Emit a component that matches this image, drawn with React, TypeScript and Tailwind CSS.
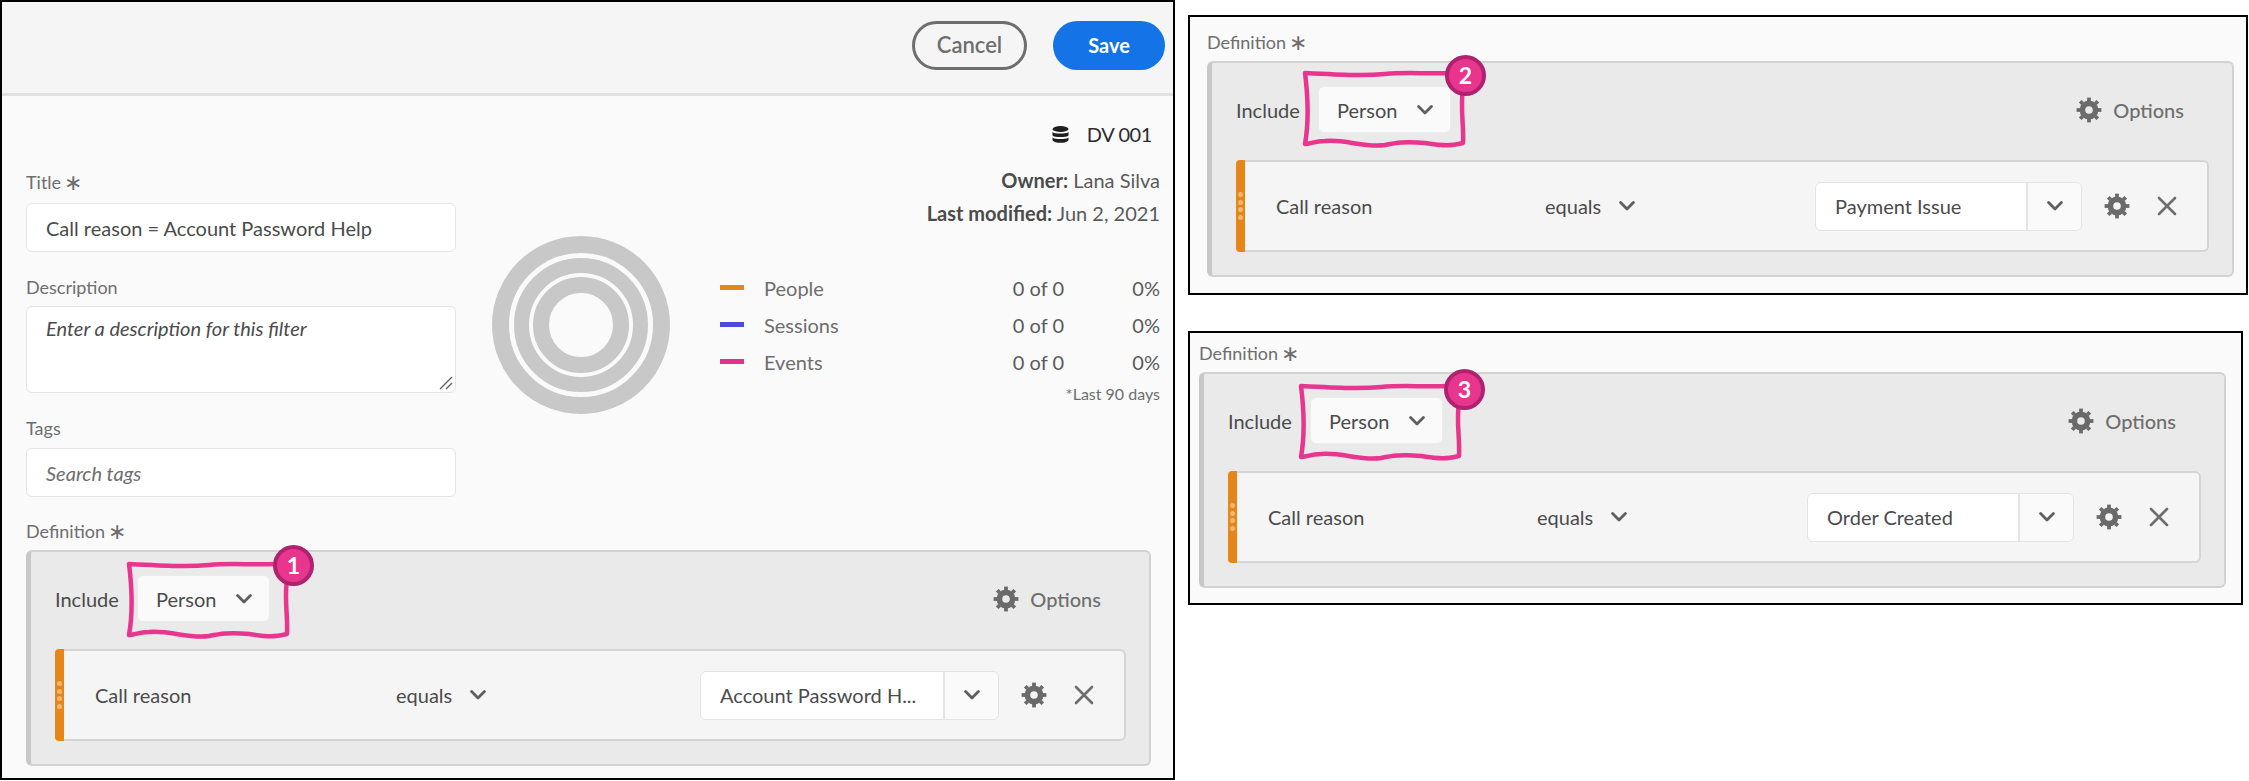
import React from "react";

function Chevron({ className = "" }: { className?: string }) {
  return (
    <svg viewBox="0 0 16 10" className={"w-4 h-[10px] " + className} fill="none" stroke="#5f5f5f" strokeWidth="2.8" strokeLinecap="round" strokeLinejoin="round">
      <polyline points="1.6,1.6 8,8 14.4,1.6" />
    </svg>
  );
}

function Gear() {
  const teeth = [0, 45, 90, 135, 180, 225, 270, 315];
  return (
    <svg viewBox="0 0 26 26" className="w-[26px] h-[26px] shrink-0" fill="none" stroke="#6a6a6a">
      <circle cx="13" cy="13" r="6.6" strokeWidth="5.6" />
      {teeth.map((a) => (
        <line key={a} x1="13" y1="4" x2="13" y2="0.6" strokeWidth="3.8" transform={`rotate(${a} 13 13)`} />
      ))}
    </svg>
  );
}

function Cross() {
  return (
    <svg viewBox="0 0 20 20" className="w-5 h-5 shrink-0" fill="none" stroke="#6e6e6e" strokeWidth="2.6" strokeLinecap="round">
      <line x1="2" y1="2" x2="18" y2="18" />
      <line x1="18" y1="2" x2="2" y2="18" />
    </svg>
  );
}

function Scribble({ className }: { className: string }) {
  return (
    <svg viewBox="0 0 170 82" className={"absolute w-[170px] h-[82px] pointer-events-none " + className} fill="none" stroke="#e8368f" strokeWidth="4.5" strokeLinejoin="round" strokeLinecap="round">
      <path d="M152 6 C125 7 105 5 85 7 C65 9 45 8 5 6 C8 30 9 55 5 77 C10 77 15 74 25 74 C45 72 65 81 85 78 C95 76 105 74 125 76 C145 79 150 79 163 76 C164 58 160 40 163 22" />
    </svg>
  );
}

function Badge({ n, className }: { n: number; className: string }) {
  return (
    <div className={"absolute w-[41px] h-[41px] rounded-full bg-[#e8368f] border-[4px] border-[#b0226f] flex items-center justify-center text-white text-[23px] font-bold " + className}>
      {n}
    </div>
  );
}

function Label({ children, star }: { children: React.ReactNode; star?: boolean }) {
  return (
    <div className="h-6 flex items-center gap-[3px] text-[18px] leading-6 text-[#6e6e6e]">
      <span>{children}</span>
      {star && <span className="text-[22px] text-[#6e6e6e]">∗</span>}
    </div>
  );
}

type DefProps = {
  value: string;
  n: number;
  boxW: string;
  rowW: string;
  equalsW: string;
  comboW: string;
  scribble: string;
  badge: string;
};

function Definition(p: DefProps) {
  return (
    <div>
      <Label star>Definition</Label>
      <div className={"mt-[7px] h-[216px] bg-[#eaeaea] border-2 border-l-[5px] border-[#d2d2d2] border-l-[#c8c8c8] rounded-md pl-[24px] pt-[23px] " + p.boxW}>
        <div className="flex items-center h-[47px] pr-[48px]">
          <span className="w-[82px] text-[20px] text-[#4b4b4b]">Include</span>
          <div className="relative w-[133px] h-[47px] bg-[#fafafa] border border-[#ececec] rounded-md flex items-center pl-[18px]">
            <span className="text-[20px] text-[#4b4b4b]">Person</span>
            <Chevron className="ml-[20px]" />
            <Scribble className={p.scribble} />
            <Badge n={p.n} className={p.badge} />
          </div>
          <div className="ml-auto flex items-center gap-[11px]">
            <Gear />
            <span className="text-[20px] font-medium text-[#6e6e6e]">Options</span>
          </div>
        </div>
        <div className={"mt-[27px] h-[92px] bg-[#f5f5f5] border-2 border-[#d5d5d5] rounded-md relative flex items-center pl-[38px] " + p.rowW}>
          <div className="absolute -left-[2px] -top-[2px] -bottom-[2px] w-[9px] bg-[#e68619] rounded-l-sm flex flex-col items-center justify-center gap-[2.5px]">
            <i className="w-[5px] h-[5px] rounded-full bg-[#f5b86f]" />
            <i className="w-[5px] h-[5px] rounded-full bg-[#f5b86f]" />
            <i className="w-[5px] h-[5px] rounded-full bg-[#f5b86f]" />
            <i className="w-[5px] h-[5px] rounded-full bg-[#f5b86f]" />
          </div>
          <span className={"text-[20px] text-[#4b4b4b] " + p.equalsW}>Call reason</span>
          <span className="text-[20px] text-[#4b4b4b]">equals</span>
          <Chevron className="ml-[18px]" />
          <div className={"ml-auto h-[49px] flex bg-white border border-[#e4e4e4] rounded-md " + p.comboW}>
            <div className="flex-1 min-w-0 flex items-center pl-[19px] text-[20px] text-[#4b4b4b] whitespace-nowrap">{p.value}</div>
            <div className="w-[55px] h-full border-l-2 border-[#e4e4e4] bg-[#fafafa] rounded-r-md flex items-center justify-center">
              <Chevron />
            </div>
          </div>
          <div className="ml-[22px] mr-[30px] flex items-center gap-[27px]">
            <Gear />
            <Cross />
          </div>
        </div>
      </div>
    </div>
  );
}

function Legend({ color, label }: { color: string; label: string }) {
  return (
    <div className="h-[37px] flex items-center text-[20px]">
      <i className={"w-6 h-[5px] " + color} />
      <span className="ml-[20px] text-[#6e6e6e]">{label}</span>
      <span className="ml-auto text-[#5a5a5a]">0 of 0</span>
      <span className="w-[96px] text-right text-[#5a5a5a]">0%</span>
    </div>
  );
}

export default function App() {
  return (
    <div className="w-[2249px] h-[781px] bg-white flex items-start font-['Lato',sans-serif] overflow-hidden">
      <div className="w-[1175px] h-[780px] border-2 border-black bg-[#fafafa] shrink-0">
        <div className="h-[94px] bg-[#f5f5f5] border-b-[3px] border-[#e1e1e1] flex items-center justify-end gap-[26px] pr-[8px] pb-[4px]">
          <div className="w-[115px] h-[49px] rounded-full border-[3px] border-[#6e6e6e] flex items-center justify-center pb-[2px] text-[22px] font-semibold text-[#6e6e6e]">Cancel</div>
          <div className="w-[112px] h-[49px] rounded-full bg-[#1473e6] flex items-center justify-center pb-[2px] text-[20px] font-bold text-white">Save</div>
        </div>
        <div className="pl-[24px] pr-[13px]">
          <div className="flex items-start h-[423px]">
            <div className="w-[430px] pt-[74px] shrink-0">
              <Label star>Title</Label>
              <div className="mt-[9px] h-[49px] bg-white border border-[#e4e4e4] rounded-md flex items-center pl-[19px] text-[20px] text-[#4b4b4b]">Call reason = Account Password Help</div>
              <div className="mt-[23px]"><Label>Description</Label></div>
              <div className="relative mt-[7px] h-[87px] bg-white border border-[#e4e4e4] rounded-md pl-[19px] pt-[6px] text-[20px] italic text-[#4b4b4b]">
                Enter a description for this filter
                <svg viewBox="0 0 14 14" className="absolute right-[2px] bottom-[2px] w-[14px] h-[14px]" stroke="#5f5f5f" strokeWidth="1.2">
                  <line x1="1" y1="13" x2="13" y2="1" />
                  <line x1="7" y1="13" x2="13" y2="7" />
                </svg>
              </div>
              <div className="mt-[23px]"><Label>Tags</Label></div>
              <div className="mt-[8px] h-[49px] bg-white border border-[#e4e4e4] rounded-md flex items-center pl-[19px] text-[20px] italic text-[#6e6e6e]">Search tags</div>
            </div>
            <svg viewBox="0 0 178 178" className="ml-[36px] mt-[140px] w-[178px] h-[178px] shrink-0" fill="none" stroke="#c8c8c8">
              <circle cx="89" cy="89" r="80.5" strokeWidth="17" />
              <circle cx="89" cy="89" r="59.5" strokeWidth="15" />
              <circle cx="89" cy="89" r="40" strokeWidth="16" />
            </svg>
            <div className="ml-[50px] flex-1 pt-[26px]">
              <div className="h-6 flex items-center justify-end pr-[8px] text-[20px] tracking-[-0.4px] text-[#2c2c2c]">
                <svg viewBox="0 0 17 17" className="w-[17px] h-[17px] mr-[18px]" fill="#1f1f1f">
                  <ellipse cx="8.5" cy="3" rx="8" ry="3" />
                  <path d="M0.5 6 C2 8 15 8 16.5 6 V9.5 C15 11.5 2 11.5 0.5 9.5 Z" />
                  <path d="M0.5 11.5 C2 13.5 15 13.5 16.5 11.5 V14 C15 17.8 2 17.8 0.5 14 Z" />
                </svg>
                DV 001
              </div>
              <div className="mt-[18px] text-right text-[20px] leading-[33px] text-[#5a5a5a]">
                <div><b className="text-[#4b4b4b]">Owner:</b> Lana Silva</div>
                <div><b className="text-[#4b4b4b]">Last modified:</b> Jun 2, 2021</div>
              </div>
              <div className="mt-[39px]">
                <Legend color="bg-[#e68619]" label="People" />
                <Legend color="bg-[#4b4bd8]" label="Sessions" />
                <Legend color="bg-[#e0318b]" label="Events" />
              </div>
              <div className="mt-[2px] text-right text-[16px] leading-6 text-[#6e6e6e]">*Last 90 days</div>
            </div>
          </div>
          <Definition
            value="Account Password H..."
            n={1}
            boxW="w-[1125px]"
            rowW="w-[1071px]"
            equalsW="w-[301px]"
            comboW="w-[299px]"
            scribble="-left-[14px] -top-[18px]"
            badge="left-[135px] -top-[31px]"
          />
        </div>
      </div>
      <div className="ml-[13px] pt-[15px] shrink-0">
        <div className="w-[1060px] h-[280px] border-2 border-black bg-[#fafafa] pl-[17px] pt-[13px]">
          <Definition
            value="Payment Issue"
            n={2}
            boxW="w-[1027px]"
            rowW="w-[973px]"
            equalsW="w-[269px]"
            comboW="w-[267px]"
            scribble="-left-[19px] -top-[20px]"
            badge="left-[126px] -top-[32px]"
          />
        </div>
        <div className="mt-[36px] w-[1055px] h-[274px] border-2 border-black bg-[#fafafa] pl-[9px] pt-[8px]">
          <Definition
            value="Order Created"
            n={3}
            boxW="w-[1027px]"
            rowW="w-[973px]"
            equalsW="w-[269px]"
            comboW="w-[267px]"
            scribble="-left-[15px] -top-[18px]"
            badge="left-[133px] -top-[29px]"
          />
        </div>
      </div>
    </div>
  );
}
